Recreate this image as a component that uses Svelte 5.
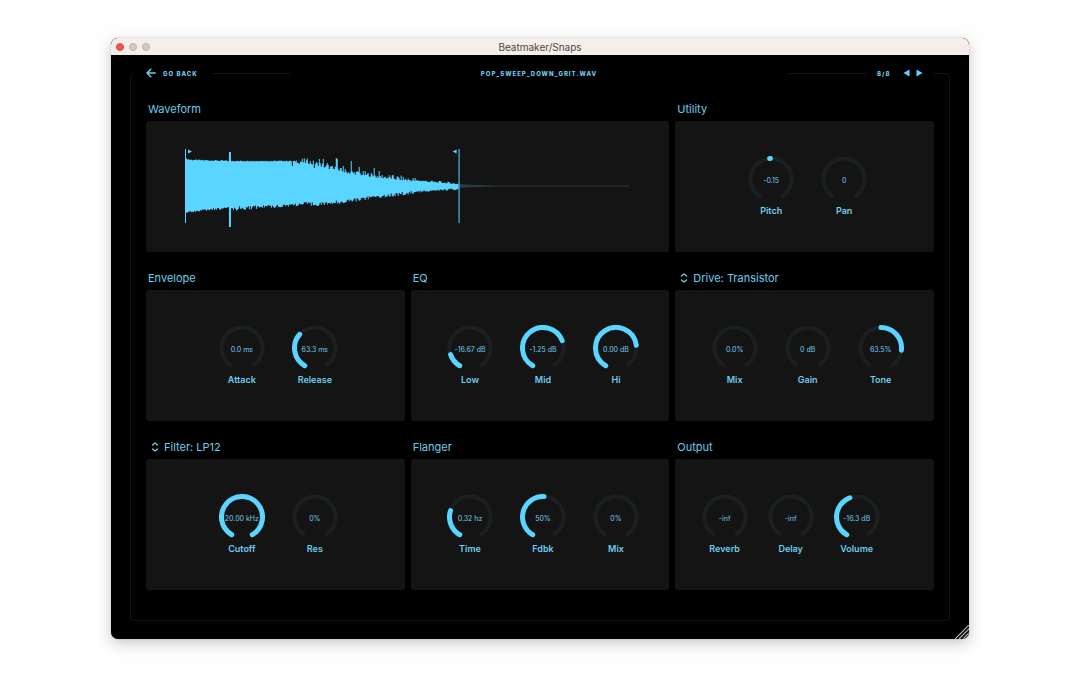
<script lang="ts">
  interface Knob {
    label: string;
    value: string;
    from: number;
    to: number;
  }

  interface Panel {
    title: string;
    options?: string[];
    compact?: boolean;
    knobs: Knob[];
  }

  const SWEEP = 300;
  const RADIUS = 20.5;

  const panels: Panel[] = [
    {
      title: 'Utility',
      knobs: [
        { label: 'Pitch', value: '-0.15', from: 0.487, to: 0.495 },
        { label: 'Pan', value: '0', from: 0.5, to: 0.5 },
      ],
    },
    {
      title: 'Envelope',
      knobs: [
        { label: 'Attack', value: '0.0 ms', from: 0, to: 0 },
        { label: 'Release', value: '63.3 ms', from: 0, to: 0.34 },
      ],
    },
    {
      title: 'EQ',
      knobs: [
        { label: 'Low', value: '-16.67 dB', from: 0, to: 0.137 },
        { label: 'Mid', value: '-1.25 dB', from: 0, to: 0.73 },
        { label: 'Hi', value: '0.00 dB', from: 0, to: 0.775 },
      ],
    },
    {
      title: 'Drive',
      options: ['Drive: Transistor'],
      knobs: [
        { label: 'Mix', value: '0.0%', from: 0, to: 0 },
        { label: 'Gain', value: '0 dB', from: 0, to: 0 },
        { label: 'Tone', value: '63.5%', from: 0.5, to: 0.82 },
      ],
    },
    {
      title: 'Filter',
      options: ['Filter: LP12'],
      knobs: [
        { label: 'Cutoff', value: '20.00 kHz', from: 0, to: 1 },
        { label: 'Res', value: '0%', from: 0, to: 0 },
      ],
    },
    {
      title: 'Flanger',
      knobs: [
        { label: 'Time', value: '0.32 hz', from: 0, to: 0.26 },
        { label: 'Fdbk', value: '50%', from: 0, to: 0.51 },
        { label: 'Mix', value: '0%', from: 0, to: 0 },
      ],
    },
    {
      title: 'Output',
      compact: true,
      knobs: [
        { label: 'Reverb', value: '-inf', from: 0, to: 0 },
        { label: 'Delay', value: '-inf', from: 0, to: 0 },
        { label: 'Volume', value: '-16.3 dB', from: 0, to: 0.433 },
      ],
    },
  ];

  // 0 is bottom left, 1 is bottom right, going clockwise
  function point(t: number) {
    const a = ((30 + t * SWEEP) * Math.PI) / 180;
    return `${(23 - RADIUS * Math.sin(a)).toFixed(2)} ${(23 + RADIUS * Math.cos(a)).toFixed(2)}`;
  }

  function arc(from: number, to: number) {
    const large = (to - from) * SWEEP > 180 ? 1 : 0;
    return `M${point(from)}A${RADIUS} ${RADIUS} 0 ${large} 1 ${point(to)}`;
  }

  // [x, height above centre, height below centre]
  const envelope = [
    [0, 27, 26],
    [8, 26, 24],
    [45, 25, 21],
    [105, 25, 17],
    [122, 24, 16],
    [138, 20, 16],
    [155, 15, 14],
    [188, 10, 9],
    [225, 6, 5],
    [274, 2, 2],
    [290, 1, 1],
    [315, 0.5, 0.5],
    [445, 0.4, 0.4],
  ];

  const spikes: Record<number, number> = { 107: 20, 114: 22, 129: 18, 134: 27, 138: 27, 142: 23, 151: 28, 152: 27, 158: 20, 166: 25, 174: 19, 189: 18, 194: 15 };

  function noise(n: number) {
    const s = Math.sin(n * 12.9898) * 43758.5453;
    return s - Math.floor(s);
  }

  function wave(start: number, end: number) {
    const top: string[] = [];
    const bottom: string[] = [];
    for (let x = start; x < end; x++) {
      const i = Math.max(1, envelope.findIndex((p) => p[0] > x));
      const [a, b] = [envelope[i - 1], envelope[i]];
      const t = (x - a[0]) / (b[0] - a[0]);
      const up = a[1] + (b[1] - a[1]) * t;
      const down = a[2] + (b[2] - a[2]) * t;
      const jitter = x > 274 ? 0 : x > 230 ? 2 : x > 110 ? 5 : 1;
      const y1 = 38 - (spikes[x] ?? up + Math.pow(noise(x), 2) * jitter - jitter / 4);
      const y2 = 38 + down + noise(x + 500) * (x > 274 ? 0 : x > 230 ? 2 : x > 45 ? 4 : 2);
      top.push(`L${x} ${y1.toFixed(1)}H${x + 1}`);
      bottom.unshift(`L${x + 1} ${y2.toFixed(1)}H${x}`);
    }
    return `M${start} 38${top.join('')}${bottom.join('')}Z`;
  }

  const activeWave = wave(0, 274);
  const trimmedWave = wave(275, 445);
</script>

{#snippet knobControl(knob: Knob)}
  <label class="knob">
    <span class="dial">
      <svg viewBox="0 0 46 46" aria-hidden="true">
        <path class="track" d={arc(0, 1)} />
        {#if knob.to > knob.from}
          <path class="level" d={arc(knob.from, knob.to)} />
        {/if}
      </svg>
      <span class="value">{knob.value}</span>
      <input type="range" min="0" max="1" step="0.001" value={knob.to} aria-valuetext={knob.value} />
    </span>
    <span class="name">{knob.label}</span>
  </label>
{/snippet}

<div class="page">
  <div class="window">
    <div class="titlebar">
      <div class="lights">
        <button class="light close" type="button" aria-label="Close"></button>
        <button class="light" type="button" aria-label="Minimize"></button>
        <button class="light" type="button" aria-label="Zoom"></button>
      </div>
      <span class="window-title">Beatmaker/Snaps</span>
    </div>

    <main class="frame">
      <header class="toolbar">
        <button class="back" type="button">
          <svg width="10" height="10" viewBox="0 0 10 10" aria-hidden="true">
            <path d="M9.2 5H1M4.8 1.2L1 5l3.8 3.8" fill="none" stroke="currentColor" stroke-width="1.5" stroke-linecap="round" stroke-linejoin="round" />
          </svg>
          GO BACK
        </button>
        <h1 class="sample-name">POP_SWEEP_DOWN_GRIT.WAV</h1>
        <nav class="pager">
          <span>8/8</span>
          <div class="arrows">
            <button type="button" aria-label="Previous sample">
              <svg width="7" height="8" viewBox="0 0 7 8"><path d="M6.5 0.5v7L0.5 4z" fill="currentColor" /></svg>
            </button>
            <button type="button" aria-label="Next sample">
              <svg width="7" height="8" viewBox="0 0 7 8"><path d="M0.5 0.5v7L6.5 4z" fill="currentColor" /></svg>
            </button>
          </div>
        </nav>
      </header>

      <div class="grid">
        <section class="module wide">
          <h2 class="module-title">Waveform</h2>
          <div class="panel wave-panel">
            <svg class="waveform" viewBox="0 0 446 80" role="img" aria-label="Sample waveform">
              <path class="wave-trimmed" d={trimmedWave} />
              <path class="wave" d={activeWave} />
              <!-- start, playhead and end markers -->
              <path class="wave" d="M0 1h1v74H0zM44 4h2v75h-2zM274 1h1v74h-1z" />
              <path class="wave" d="M3 1.5L7 3.5L3 5.5zM272 1.5L268 3.5L272 5.5z" />
            </svg>
          </div>
        </section>

        {#each panels as panel}
          <section class="module">
            {#if panel.options}
              <div class="module-title picker">
                <svg width="8" height="10" viewBox="0 0 8 10" aria-hidden="true">
                  <path d="M1.5 3L4 1L6.5 3M1.5 7L4 9L6.5 7" fill="none" stroke="currentColor" stroke-width="1.3" stroke-linecap="round" stroke-linejoin="round" />
                </svg>
                <select aria-label={panel.title}>
                  {#each panel.options as option}
                    <option>{option}</option>
                  {/each}
                </select>
              </div>
            {:else}
              <h2 class="module-title">{panel.title}</h2>
            {/if}
            <div class="panel" class:compact={panel.compact}>
              {#each panel.knobs as knob}
                {@render knobControl(knob)}
              {/each}
            </div>
          </section>
        {/each}
      </div>
    </main>

    <svg class="grip" width="14" height="14" viewBox="0 0 14 14" aria-hidden="true">
      <path d="M0 14L14 0M4 14L14 4M8 14L14 8" stroke="#b5b5b5" stroke-width="1.2" />
    </svg>
  </div>
</div>

<style>
  :global(body) {
    margin: 0;
    background: #fefefe;
  }

  .page {
    --accent: #5ad5ff;
    --text: #6fcdee;
    padding: 38px 111px 44px;
    font-family: Inter, 'Liberation Sans', sans-serif;
    color: var(--text);
  }

  .page * {
    box-sizing: border-box;
  }

  button,
  select {
    all: unset;
    cursor: pointer;
  }

  button:focus-visible,
  select:focus-visible {
    outline: 1px solid var(--accent);
  }

  .window {
    position: relative;
    overflow: hidden;
    padding-bottom: 18px;
    background: #000;
    border-radius: 7px;
    box-shadow: 0 0 1px rgba(0, 0, 0, 0.4), 0 4px 14px rgba(0, 0, 0, 0.22);
  }

  /* Title bar */
  .titlebar {
    display: grid;
    grid-template-columns: 1fr auto 1fr;
    align-items: center;
    height: 17px;
    padding: 0 5px;
    background: #f6eeea;
  }

  .lights {
    display: flex;
    gap: 5px;
  }

  .light {
    width: 8px;
    height: 8px;
    border: 1px solid #bdb3b1;
    border-radius: 50%;
    background: #d3cac8;
  }

  .close {
    border-color: #e2463f;
    background: #ee5850;
  }

  .window-title {
    font-size: 10px;
    line-height: 16px;
    color: #4c4644;
  }

  /* Frame */
  .frame {
    margin: 18px 19px 0;
    padding: 0 15px 30px;
    border: 1px solid #141516;
    border-radius: 4px;
  }

  /* the filled parts interrupt the top border of the frame */
  .toolbar {
    display: flex;
    gap: 78px;
    height: 16px;
    margin: -9px 0 0 -12px;
    font-size: 6px;
    line-height: 17px;
    font-weight: 800;
    letter-spacing: 1px;
  }

  .back {
    display: flex;
    flex: none;
    align-items: center;
    gap: 7px;
    width: 78px;
    padding-left: 12px;
    white-space: nowrap;
    background: #000;
  }

  .sample-name {
    flex: 1;
    margin: 0;
    font-size: 6px;
    font-weight: 800;
    text-align: center;
    background: #000;
  }

  .pager {
    display: flex;
    flex: none;
    align-items: center;
    justify-content: space-between;
    width: 68px;
    padding: 0 11px;
    background: #000;
  }

  .arrows {
    display: flex;
    gap: 6px;
    color: var(--accent);
  }

  .arrows button {
    display: flex;
  }

  /* Modules */
  .grid {
    display: grid;
    grid-template-columns: repeat(3, 1fr);
    gap: 17px 6px;
    margin-top: 19px;
  }

  .wide {
    grid-column: span 2;
  }

  .module-title {
    display: flex;
    align-items: center;
    height: 21px;
    margin: 0;
    padding: 0 2px 3px;
    font-size: 11px;
    line-height: 18px;
    font-weight: 400;
  }

  .picker {
    gap: 5px;
    padding-left: 5px;
  }

  .panel {
    display: flex;
    justify-content: center;
    gap: 27px;
    height: 131px;
    padding: 35px 0 0 6px;
    background: #141414;
    border-radius: 3px;
  }

  .compact {
    gap: 20px;
    padding-left: 0;
    padding-right: 28px;
  }

  .wave-panel {
    padding: 27px 39px 0;
  }

  .waveform {
    width: 100%;
    height: 80px;
  }

  .wave {
    fill: var(--accent);
  }

  .wave-trimmed {
    fill: #283a42;
  }

  /* Knobs */
  .knob {
    display: flex;
    flex-direction: column;
    align-items: center;
    width: 46px;
  }

  .dial {
    position: relative;
    display: grid;
    place-items: center;
    width: 46px;
    height: 46px;
  }

  .dial > * {
    grid-area: 1 / 1;
  }

  .dial svg {
    width: 46px;
    height: 46px;
  }

  .dial input {
    width: 100%;
    height: 100%;
    margin: 0;
    opacity: 0;
    cursor: pointer;
  }

  .track,
  .level {
    fill: none;
    stroke-width: 5;
  }

  .track {
    stroke: #1a2022;
    stroke-width: 4;
  }

  .level {
    stroke: var(--accent);
    stroke-linecap: round;
  }

  .value {
    padding-top: 4px;
    font-size: 7px;
    line-height: 10px;
    font-weight: 400;
    white-space: nowrap;
  }

  .name {
    margin-top: 3px;
    font-size: 9px;
    line-height: 12px;
    font-weight: 600;
  }

  .grip {
    position: absolute;
    right: 0;
    bottom: 0;
  }
</style>
